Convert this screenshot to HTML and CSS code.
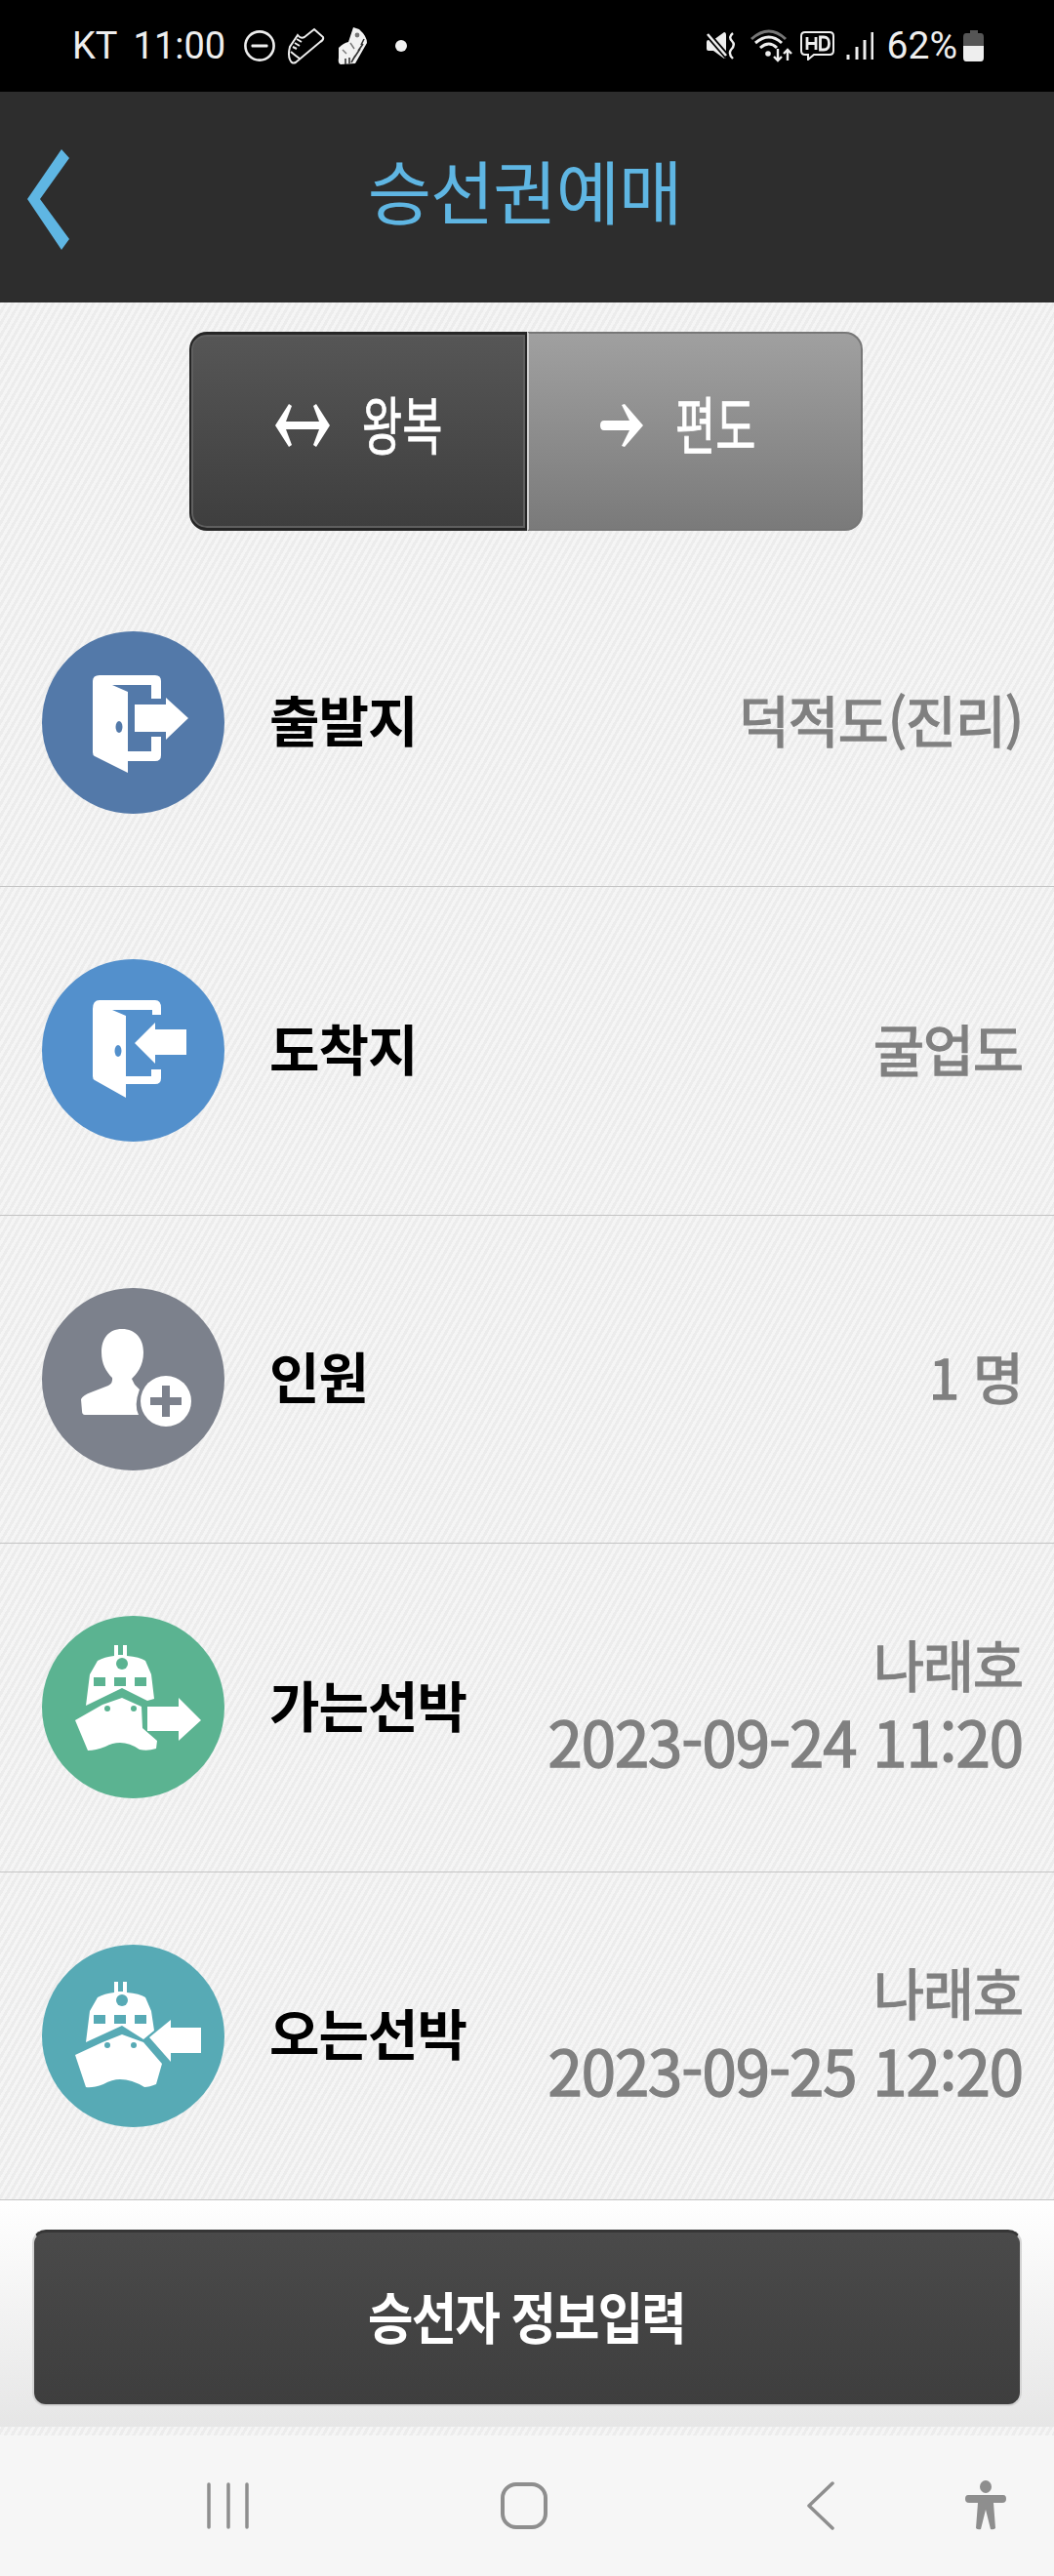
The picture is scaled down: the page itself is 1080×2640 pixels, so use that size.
FILE: index.html
```html
<!DOCTYPE html>
<html lang="ko">
<head>
<meta charset="utf-8">
<title>승선권예매</title>
<link rel="stylesheet" href="styles.css">
</head>
<body>
<div class="phone">
  <div class="status">
    <div class="status-left">
      <span class="carrier">KT</span>
      <span class="clock">11:00</span>
      <svg class="i-dnd" width="32" height="32" viewBox="0 0 32 32"><circle cx="16" cy="16" r="14.6" fill="none" stroke="#eee" stroke-width="2.6"/><rect x="7.5" y="14.6" width="17" height="3" rx="1" fill="#eee"/></svg>
      <svg class="i-shoe" width="38" height="38" viewBox="0 0 38 38"><path d="M2 33 Q0 28 2 20 L10 8 Q13 12 17 10 L27 2 L36 10 Q37 13 33 15 L8 36 Q4 38 2 33Z" fill="none" stroke="#eee" stroke-width="2"/><path d="M3 25 Q9 30 12 32 M9 12l5 3M7 16l5 3M5 20l4 2" fill="none" stroke="#eee" stroke-width="2"/></svg>
      <svg class="i-spike" width="30" height="40" viewBox="0 0 30 40"><path d="M16 1 L22 3 Q30 10 30 17 L18 38 L3 39 Q0 38 1 32 L1 22 Q6 17 11 16Z" fill="#f2f2f2"/><path d="M27 13 L24 19M26 18 L21 25M23 23 L17 32M18 30 L14 37M12 32V38M8 33V39" stroke="#333" stroke-width="1.6" fill="none"/><circle cx="20" cy="9" r="2.4" fill="#777"/><path d="M5 24l4 4M13 17l4 6" stroke="#777" stroke-width="1.4"/></svg>
      <span class="dot"></span>
    </div>
    <div class="status-right">
      <svg class="i-mute" width="30" height="28" viewBox="0 0 30 28"><path d="M0 10 Q0 8 2 8 L7 8 L18 0 Q20 0 20 3 V24 Q20 27 18 27 L7 19 H2 Q0 19 0 17Z" fill="#eee"/><path d="M1 2 L21 25" stroke="#000" stroke-width="6"/><path d="M1 2 L20 24" stroke="#eee" stroke-width="2.6"/><path d="M27 1 Q22 5 26 9 Q30 13 25 18 Q22 22 27 27" fill="none" stroke="#eee" stroke-width="2.4"/></svg>
      <svg class="i-wifi" width="44" height="34" viewBox="0 0 44 34"><path d="M1 10 Q19 -6 36 10" fill="none" stroke="#777" stroke-width="3"/><path d="M5 14 Q19 2 32 14M10 19 Q19 11 27 19" fill="none" stroke="#eee" stroke-width="3"/><circle cx="18" cy="25" r="2.8" fill="#eee"/><path d="M28 20V32M24 28l4 4 4-4M38 32V21M34 25l4-4 4 4" fill="none" stroke="#eee" stroke-width="2.4"/></svg>
      <svg class="i-hd" width="35" height="30" viewBox="0 0 35 30"><path d="M5 1 H30 Q34 1 34 5 V20 Q34 24 30 24 H14 L8 29 V24 H5 Q1 24 1 20 V5 Q1 1 5 1Z" fill="none" stroke="#eee" stroke-width="2"/><path d="M7 6V19M16 6V19M7 12.500H16M20.500 6V19H24Q29.500 19 29.500 12.500 Q29.500 6 24 6Z" fill="none" stroke="#eee" stroke-width="2.800"/></svg>
      <svg class="i-signal" width="28" height="28" viewBox="0 0 28 28"><path d="M2 23V28M11 15V28M19 8V28M27 0V28" stroke="#eee" stroke-width="3" fill="none"/></svg>
      <span class="battery-text">62%</span>
      <svg class="i-batt" width="22" height="32" viewBox="0 0 22 32"><path d="M7 0H15V3H18Q21 3 21 7V16H0V7Q0 3 3 3H7Z" fill="#555"/><path d="M0 16H21V28Q21 32 18 32H3Q0 32 0 28Z" fill="#eee"/></svg>
    </div>
  </div>

  <header class="appbar">
    <svg class="back" width="46" height="104" viewBox="0 0 46 104"><polygon points="35,0 43,9 13,51 43,92 35,103 0,51" fill="#5fb6e3"/></svg>
    <h1 class="title">승선권예매</h1>
  </header>

  <div class="toggle-area">
    <div class="toggle">
      <div class="seg seg-on">
        <svg class="t-arrow" width="56" height="44" viewBox="0 0 56 44"><polygon points="14,0 17,2 11,18 45,18 39,2 42,0 56,22 42,44 39,42 45,26 11,26 17,42 14,44 0,22" fill="#fff"/></svg>
        <span class="seg-label"><span class="seg-text">왕복</span></span>
      </div>
      <div class="seg seg-off">
        <svg class="t-arrow" width="44" height="44" viewBox="0 0 44 44"><path d="M4 17 H30 L22 1 L25 0 L44 22 L25 44 L22 43 L30 27 H4 Q0 27 0 22 Q0 17 4 17Z" fill="#fff"/></svg>
        <span class="seg-label"><span class="seg-text">편도</span></span>
      </div>
    </div>
  </div>

  <div class="row">
    <div class="badge b-dep">
      <svg width="187" height="187" viewBox="0 0 187 187"><g fill="#fff"><path d="M52 51 Q52 45 59 45 H116 Q122 45 122 51 V69 H112 V55 H72 L88 62 V123 H112 V108 H122 V127 Q122 133 116 133 H88 V145 L54 128 Q52 127 52 124Z"/><polygon points="95,75 127,75 127,68 150,89 127,111 127,103 95,103"/></g><ellipse cx="79" cy="98" rx="3.500" ry="6" fill="#5379a9"/></svg>
    </div>
    <span class="label">출발지</span>
    <div class="value">덕적도(진리)</div>
  </div>

  <div class="row">
    <div class="badge b-arr">
      <svg width="187" height="187" viewBox="0 0 187 187"><g fill="#fff"><path d="M52 51 Q52 42 59 42 H116 Q122 42 122 50 V57 H113 V52 H72 L86 58 V120 H112 V113 H122 V122 Q122 128 116 128 H86 V142 L54 124 Q52 123 52 120Z"/><polygon points="95,86 116,65 116,72 148,72 148,98 116,98 116,107"/></g><ellipse cx="78" cy="94" rx="3.500" ry="6" fill="#5390cc"/></svg>
    </div>
    <span class="label">도착지</span>
    <div class="value">굴업도</div>
  </div>

  <div class="row">
    <div class="badge b-person">
      <svg width="187" height="187" viewBox="0 0 187 187"><path d="M82 42 C96 42 104 52 104 66 C104 80 97 88 92 93 L95 99 L100 104 Q94 120 99 130 H44 Q41 130 41 126 L40 114 Q42 110 50 107 L68 100 Q73 97 72 92 C66 86 61 78 61 66 C61 52 68 42 82 42Z" fill="#fff"/><circle cx="127" cy="116" r="26" fill="#fff"/><path d="M111 116 H143 M127 100 V132" stroke="#7c818c" stroke-width="8" fill="none"/></svg>
    </div>
    <span class="label">인원</span>
    <div class="value">1 명</div>
  </div>

  <div class="row">
    <div class="badge b-go">
      <svg width="187" height="187" viewBox="0 0 187 187"><g fill="#fff"><path d="M74 41 V30 H78 V40 H83 V30 H87 V41 Q100 42 106 46 L112 60 L115 85 L108 87 L82 74 L45 92 L49 60 L57 46 Q64 42 74 41Z"/><path d="M82 84 L102 93 L103 115 L118 128 L117 136 Q108 139 100 137 Q90 130 80 130 Q72 130 65 134 Q55 138 47 138 L34 107 L62 91Z"/><polygon points="108,93 140,93 140,84 163,107 140,128 140,118 108,118"/></g><g fill="#5bb391"><circle cx="82" cy="49" r="6"/><rect x="53" y="63" width="12" height="9"/><rect x="74" y="63" width="12" height="9"/><rect x="95" y="63" width="12" height="9"/><circle cx="67" cy="95" r="3"/><circle cx="94" cy="95" r="3"/></g></svg>
    </div>
    <span class="label">가는선박</span>
    <div class="value">
      <div>나래호</div>
      <div class="date">2023-09-24 11:20</div>
    </div>
  </div>

  <div class="row">
    <div class="badge b-back">
      <svg width="187" height="187" viewBox="0 0 187 187"><g fill="#fff"><path d="M74 49 V38 H78 V48 H83 V38 H87 V49 Q100 50 106 54 L112 68 L115 88 L104 97 L82 83 L45 100 L49 68 L57 54 Q64 50 74 49Z"/><path d="M82 92 L104 100 L123 122 L117 143 Q110 146 105 146 Q92 138 80 138 Q72 138 63 143 Q52 147 45 146 L34 113 L62 100Z"/><polygon points="110,95 132,77 132,85 163,85 163,111 132,111 132,120"/></g><g fill="#57aab5"><circle cx="82" cy="57" r="6"/><rect x="53" y="72" width="12" height="9"/><rect x="74" y="72" width="12" height="9"/><rect x="95" y="72" width="12" height="9"/><circle cx="67" cy="103" r="3"/><circle cx="94" cy="103" r="3"/></g></svg>
    </div>
    <span class="label">오는선박</span>
    <div class="value">
      <div>나래호</div>
      <div class="date">2023-09-25 12:20</div>
    </div>
  </div>

  <div class="action">
    <button class="cta" type="button"><span class="cta-text">승선자 정보입력</span></button>
  </div>

  <div class="spacer"></div>

  <nav class="navbar">
    <svg class="n-recent" width="44" height="48" viewBox="0 0 44 48"><path d="M2 2V46M22 2V46M41 2V46" stroke="#8e8e8e" stroke-width="3.500" stroke-linecap="round" fill="none"/></svg>
    <svg class="n-home" width="48" height="48" viewBox="0 0 48 48"><rect x="2" y="2" width="44" height="44" rx="14" fill="none" stroke="#8e8e8e" stroke-width="4"/></svg>
    <svg class="n-back" width="30" height="50" viewBox="0 0 30 50"><path d="M27 2 L3 25 L27 48" fill="none" stroke="#8e8e8e" stroke-width="3.500" stroke-linecap="round" stroke-linejoin="round"/></svg>
    <svg class="n-a11y" width="42" height="52" viewBox="0 0 42 52"><ellipse cx="21" cy="6.500" rx="6" ry="6.500" fill="#8e8e8e"/><path d="M3 15 H39 Q42 15 42 19 Q42 23 38 23 H29 L31 49 Q29 51 26 50 L21 30 L16 50 Q13 51 11 49 L13 23 H4 Q0 23 0 19 Q0 15 3 15Z" fill="#8e8e8e"/></svg>
  </nav>
</div>
</body>
</html>
```

FILE: styles.css
```css
* { box-sizing: border-box; }
html, body { margin: 0; padding: 0; }
body {
  width: 1080px;
  height: 2640px;
  overflow: hidden;
  font-family: "Noto Sans CJK KR", "Noto Sans", sans-serif;
}
.phone {
  width: 1080px;
  height: 2640px;
  display: flex;
  flex-direction: column;
  background: repeating-linear-gradient(120deg, #f5f5f5 0 3px, #ececec 3px 6px);
}

/* status bar */
.status {
  height: 94px;
  flex: none;
  background: #000;
  color: #eee;
  display: flex;
  align-items: center;
  justify-content: space-between;
  padding: 0 71px 0 74px;
  font-family: Roboto, sans-serif;
  font-size: 38px;
}
.status-left, .status-right { display: flex; align-items: center; }
.carrier { margin-right: 16px; }
.i-dnd { margin-left: 19px; }
.i-shoe { margin-left: 13px; }
.i-spike { margin-left: 13px; }
.dot {
  width: 12px; height: 12px; border-radius: 50%;
  background: #f2f2f2; margin-left: 29px;
}
.i-wifi { margin-left: 15px; }
.i-hd { margin-left: 7px; }
.i-signal { margin-left: 12px; }
.battery-text { margin-left: 14px; font-size: 39px; }
.i-batt { margin-left: 6px; }

/* app bar */
.appbar {
  height: 216px;
  flex: none;
  background: #2d2d2d;
  display: flex;
  align-items: center;
  justify-content: center;
  position: relative;
}
.back { position: absolute; left: 28px; top: 59px; }
.title {
  margin: 0 5px 18px 0;
  font-size: 71px;
  font-weight: 400;
  color: #5fb6e3;
  letter-spacing: -1px;
  line-height: 1;
}

/* toggle */
.toggle-area {
  height: 262.5px;
  flex: none;
  padding: 30px 0 0 194px;
}
.toggle {
  width: 690px;
  height: 204px;
  display: flex;
}
.seg {
  flex: none;
  height: 204px;
  display: flex;
  align-items: center;
  justify-content: center;
  gap: 33px;
  padding-bottom: 12px;
  color: #fff;
}
.seg-on {
  width: 346px;
  border: 2px solid #262626;
  border-width: 3px 2px 3px 2px;
  border-radius: 18px 0 0 18px;
  background: linear-gradient(#565656, #3e3e3e);
  box-shadow: inset 0 0 0 2px #5f5f5f;
}
.seg-off {
  width: 344px;
  border: 2px solid #777;
  border-left: 2px solid #cfcfcf;
  border-radius: 0 18px 18px 0;
  background: linear-gradient(#a0a0a0, #7a7a7a);
  padding-right: 36px;
}
.seg-label {
  display: block;
  width: 82px;
  height: 64px;
  margin-bottom: 8px;
}
.seg-text {
  display: block;
  font-size: 64px;
  line-height: 1;
  white-space: nowrap;
  -webkit-text-stroke: .8px #fff;
  transform: scaleX(.7);
  transform-origin: left center;
}

/* rows */
.row {
  height: 336.5px;
  flex: none;
  display: flex;
  align-items: center;
  padding: 0 32px 0 43px;
  border-bottom: 1px solid #c4c4c4;
}
.badge {
  width: 187px;
  height: 187px;
  flex: none;
  border-radius: 50%;
  margin-right: 46px;
}
.badge svg { display: block; }
.b-dep { background: #5379a9; }
.b-arr { background: #5390cc; }
.b-person { background: #7c818c; }
.b-go { background: #5bb391; }
.b-back { background: #57aab5; }
.label {
  font-size: 56px;
  font-weight: 700;
  color: #000;
  letter-spacing: -1px;
  line-height: 1;
  white-space: nowrap;
  padding-bottom: 8px;
}
.value {
  margin-left: auto;
  text-align: right;
  font-size: 56.5px;
  font-weight: 400;
  color: #808080;
  -webkit-text-stroke: 1.4px #808080;
  letter-spacing: -1px;
  line-height: 1;
  white-space: nowrap;
  padding-bottom: 8px;
}
.date {
  margin-top: 20px;
  font-size: 63.5px;
  letter-spacing: -1px;
}

/* action */
.action {
  height: 232px;
  flex: none;
  padding: 30px 33px 21px;
  background: linear-gradient(#fff, #e6e6e6);
}
.cta {
  display: block;
  width: 100%;
  height: 181px;
  padding: 0 0 8px;
  border: 2px solid #d4d4d4;
  border-top: 3px solid #363636;
  border-radius: 14px;
  background: linear-gradient(#4a4a4a, #3e3e3e);
  color: #fff;
  font-family: inherit;
  font-size: 57px;
  font-weight: 700;
  letter-spacing: -2px;
}
.cta-text {
  display: inline-block;
  transform: scaleX(.885);
}

.spacer { height: 8.500px; flex: none; }

/* nav */
.navbar {
  height: 144.500px;
  flex: none;
  background: #f6f6f6;
  display: flex;
  align-items: center;
  padding-left: 212px;
}
.n-home { margin-left: 257px; }
.n-back { margin-left: 265px; }
.n-a11y { margin-left: 133px; }
```
